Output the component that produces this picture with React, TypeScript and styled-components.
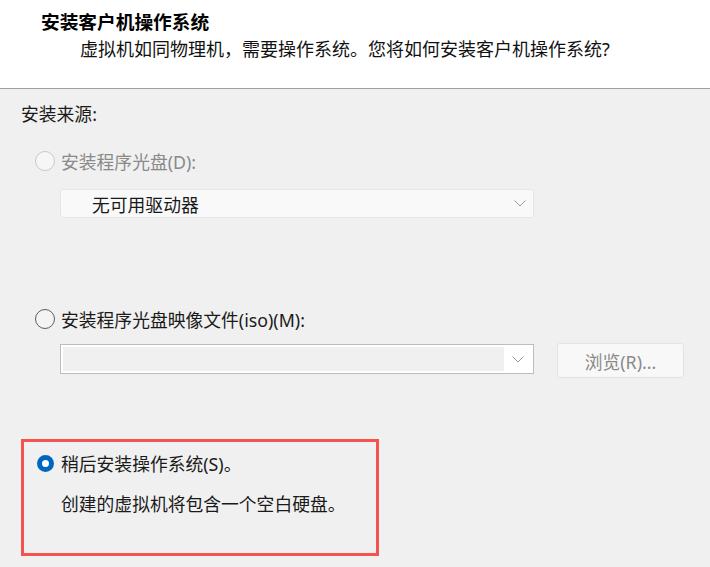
import React from 'react'
import styled, { createGlobalStyle } from 'styled-components'

const GlobalStyle = createGlobalStyle`
  html, body {
    margin: 0;
    padding: 0;
    background: #f0f0f0;
  }
  body {
    font-family: "Noto Sans", "Noto Sans CJK SC", sans-serif;
    color: #1a1a1a;
  }
`

const Page = styled.div`
  width: 710px;
  height: 567px;
  overflow: hidden;
  background: #f0f0f0;
`

const Header = styled.div`
  height: 89px;
  box-sizing: border-box;
  background: #ffffff;
  border-bottom: 1px solid #a0a0a0;
  padding: 10px 0 0 41px;
`

const Title = styled.div`
  font-size: 18.7px;
  font-weight: 700;
  line-height: 24px;
  color: #000;
`

const Subtitle = styled.div`
  margin: 3px 0 0 39px;
  font-size: 18px;
  line-height: 24px;
  color: #111;
`

const Body = styled.div`
  padding: 13px 21px 0;
  font-size: 17.8px;
`

const SectionLabel = styled.div`
  line-height: 24px;
`

const OptionRow = styled.div<{ $top: number; $disabled?: boolean }>`
  display: flex;
  align-items: center;
  gap: 6px;
  height: 24px;
  margin-top: ${({ $top }) => $top}px;
  padding-left: 14px;
  color: ${({ $disabled }) => ($disabled ? '#8a8a8a' : '#1a1a1a')};
`

const RadioBox = styled.span`
  width: 20px;
  height: 20px;
  display: flex;
  align-items: center;
  justify-content: center;
  flex-shrink: 0;
`

const RadioCircle = styled.span<{ $checked?: boolean; $disabled?: boolean }>`
  box-sizing: border-box;
  border-radius: 50%;
  width: ${({ $checked }) => ($checked ? 17 : 20)}px;
  height: ${({ $checked }) => ($checked ? 17 : 20)}px;
  background: ${({ $checked, $disabled }) => ($checked ? '#ffffff' : $disabled ? '#f6f6f6' : '#f4f4f4')};
  border: ${({ $checked, $disabled }) =>
    $checked ? '5px solid #0067c0' : $disabled ? '1px solid #c9c9c9' : '1px solid #5c5c5c'};
`

const Radio: React.FC<{ checked?: boolean; disabled?: boolean }> = ({ checked, disabled }) => (
  <RadioBox>
    <RadioCircle $checked={checked} $disabled={disabled} />
  </RadioBox>
)

const Chevron = () => (
  <svg width="12" height="7" viewBox="0 0 12 7">
    <polyline points="0.5,0.5 6,6 11.5,0.5" fill="none" stroke="#9a9a9a" strokeWidth="1" />
  </svg>
)

const DisabledSelect = styled.div`
  box-sizing: border-box;
  width: 474px;
  height: 29px;
  margin: 16px 0 0 39px;
  background: #f9f9f9;
  border: 1px solid #e6e6e6;
  border-radius: 3px;
  display: flex;
  align-items: center;
  padding: 0 7px 0 31px;
  color: #1a1a1a;
`

const SelectText = styled.span`
  flex: 1;
`

const FileRow = styled.div`
  display: flex;
  align-items: flex-start;
  gap: 23px;
  margin: 12px 0 0 39px;
`

const ComboBox = styled.div`
  box-sizing: border-box;
  width: 474px;
  height: 30px;
  margin-top: 1px;
  background: #ffffff;
  border: 1px solid #bdbdbd;
  padding: 2px;
  display: flex;
  align-items: center;
`

const ComboField = styled.div`
  align-self: stretch;
  flex: 1;
  background: #f0f0f0;
`

const ComboArrow = styled.div`
  width: 27px;
  display: flex;
  justify-content: center;
`

const Button = styled.div`
  box-sizing: border-box;
  width: 127px;
  height: 35px;
  background: #f8f8f8;
  border: 1px solid #e3e3e3;
  border-radius: 3px;
  display: flex;
  align-items: center;
  justify-content: center;
  color: #8a8a8a;
`

const Highlight = styled.div`
  box-sizing: border-box;
  width: 358px;
  height: 117px;
  margin-top: 61px;
  border: 3px solid #f65252;
  padding-top: 9px;
`

const InnerOption = styled(OptionRow)`
  padding-left: 11px;
`

const Description = styled.div`
  margin: 17px 0 0 37px;
  line-height: 24px;
`

export default function App() {
  return (
    <Page>
      <GlobalStyle />
      <Header>
        <Title>安装客户机操作系统</Title>
        <Subtitle>虚拟机如同物理机，需要操作系统。您将如何安装客户机操作系统?</Subtitle>
      </Header>
      <Body>
        <SectionLabel>安装来源:</SectionLabel>

        <OptionRow $top={23} $disabled>
          <Radio disabled />
          <span>安装程序光盘(D):</span>
        </OptionRow>
        <DisabledSelect>
          <SelectText>无可用驱动器</SelectText>
          <Chevron />
        </DisabledSelect>

        <OptionRow $top={89}>
          <Radio />
          <span>安装程序光盘映像文件(iso)(M):</span>
        </OptionRow>
        <FileRow>
          <ComboBox>
            <ComboField />
            <ComboArrow>
              <Chevron />
            </ComboArrow>
          </ComboBox>
          <Button>浏览(R)...</Button>
        </FileRow>

        <Highlight>
          <InnerOption $top={0}>
            <Radio checked />
            <span>稍后安装操作系统(S)。</span>
          </InnerOption>
          <Description>创建的虚拟机将包含一个空白硬盘。</Description>
        </Highlight>
      </Body>
    </Page>
  )
}
